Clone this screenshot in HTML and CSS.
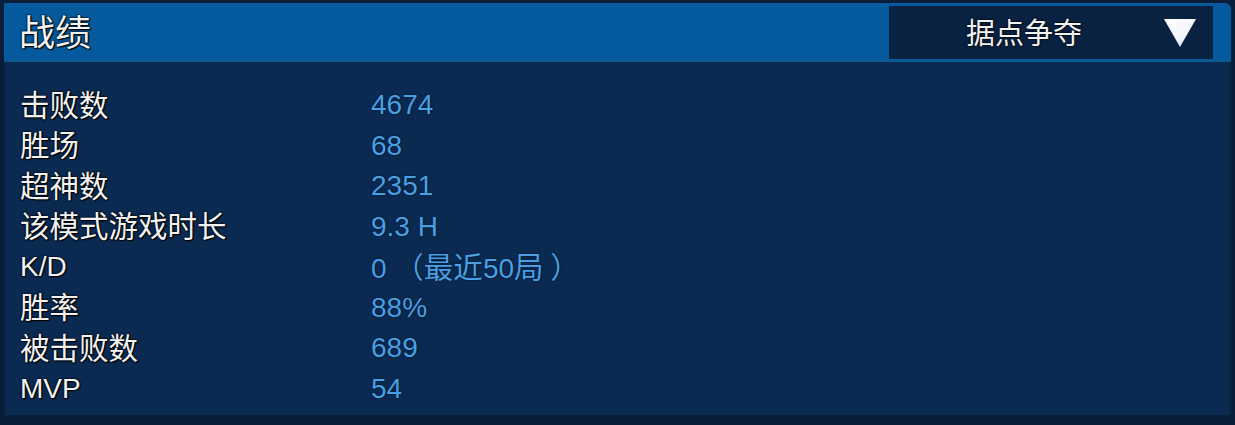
FILE: index.html
```html
<!DOCTYPE html>
<html lang="zh">
<head>
<meta charset="utf-8">
<link rel="stylesheet" href="styles.css">
</head>
<body>
<div class="panel">
  <div class="header">
    <div class="title">战绩</div>
    <div class="select">
      <span class="select-text">据点争夺</span>
      <svg class="arrow" width="34" height="30" viewBox="0 0 34 30">
        <defs>
          <linearGradient id="g" x1="0" y1="0" x2="1" y2="1">
            <stop offset="0" stop-color="#ffffff"/>
            <stop offset="0.6" stop-color="#f2f6fb"/>
            <stop offset="1" stop-color="#b9cbe0"/>
          </linearGradient>
        </defs>
        <polygon points="1,1 33,1 17,29" fill="url(#g)"/>
      </svg>
    </div>
  </div>
  <div class="body">
    <div class="row"><span class="label">击败数</span><span class="value">4674</span></div>
    <div class="row"><span class="label">胜场</span><span class="value">68</span></div>
    <div class="row"><span class="label">超神数</span><span class="value">2351</span></div>
    <div class="row"><span class="label">该模式游戏时长</span><span class="value">9.3 H</span></div>
    <div class="row"><span class="label latin">K/D</span><span class="value">0 <span class="cjk">（最近</span>50<span class="cjk">局 ）</span></span></div>
    <div class="row"><span class="label">胜率</span><span class="value">88%</span></div>
    <div class="row"><span class="label">被击败数</span><span class="value">689</span></div>
    <div class="row"><span class="label latin">MVP</span><span class="value">54</span></div>
  </div>
</div>
</body>
</html>
```
FILE: styles.css
```css
html, body {
  margin: 0;
  padding: 0;
  background: #0a1e39;
  width: 1235px;
  height: 425px;
  overflow: hidden;
}
body {
  padding-top: 3px;
  padding-left: 4px;
  box-sizing: border-box;
  font-family: "Liberation Sans", "Noto Sans CJK SC", sans-serif;
}
.panel {
  width: 1227px;
}
.header {
  height: 57px;
  background: #045a9c;
  border-top-right-radius: 6px;
  border-bottom: 2px solid #0d5890;
  display: flex;
  align-items: center;
  justify-content: space-between;
  padding-left: 15px;
  padding-right: 18px;
}
.title {
  color: #f4f4f4;
  font-family: "Noto Sans CJK SC", sans-serif;
  font-size: 36px;
  line-height: 40px;
  margin-top: -4px;
  text-shadow: 0 0 2px #000, 0 0 2px #000, 1px 1px 1px #000;
}
.select {
  width: 324px;
  height: 53px;
  margin-top: 2px;
  background: #0a2241;
  display: flex;
  align-items: center;
  box-sizing: border-box;
  padding-left: 77px;
}
.select-text {
  color: #f2f2f2;
  font-family: "Noto Sans CJK SC", sans-serif;
  font-size: 29px;
  line-height: 32px;
  margin-bottom: 3px;
  text-shadow: 0 0 2px #000, 0 0 2px #000;
  width: 118px;
}
.arrow {
  margin-left: 79px;
  margin-top: 1px;
  display: block;
}
.body {
  height: 353px;
  background: #0b2a52;
  box-shadow: inset -2px 0 0 #0a2546, inset 2px 0 0 #0a2546;
  padding-top: 23px;
  padding-left: 16px;
  box-sizing: border-box;
}
.row {
  display: flex;
  height: 40.5px;
  align-items: center;
}
.label {
  width: 351px;
  color: #f2f2f2;
  font-family: "Noto Sans CJK SC", sans-serif;
  font-size: 29.5px;
  line-height: 34px;
  margin-bottom: 5px;
  text-shadow: 0 0 2px #000, 0 0 2px #000, 1px 1px 1px #000;
}
.label.latin {
  font-family: "Liberation Sans", sans-serif;
  font-size: 28px;
  margin-bottom: 0;
}
.value {
  color: #4a9fe2;
  font-family: "Liberation Sans", sans-serif;
  font-size: 28px;
  line-height: 34px;
  text-shadow: 0 0 2px #031528, 0 0 1px #031528;
}
.cjk {
  font-family: "Noto Sans CJK SC", sans-serif;
  font-size: 29.5px;
}
```
